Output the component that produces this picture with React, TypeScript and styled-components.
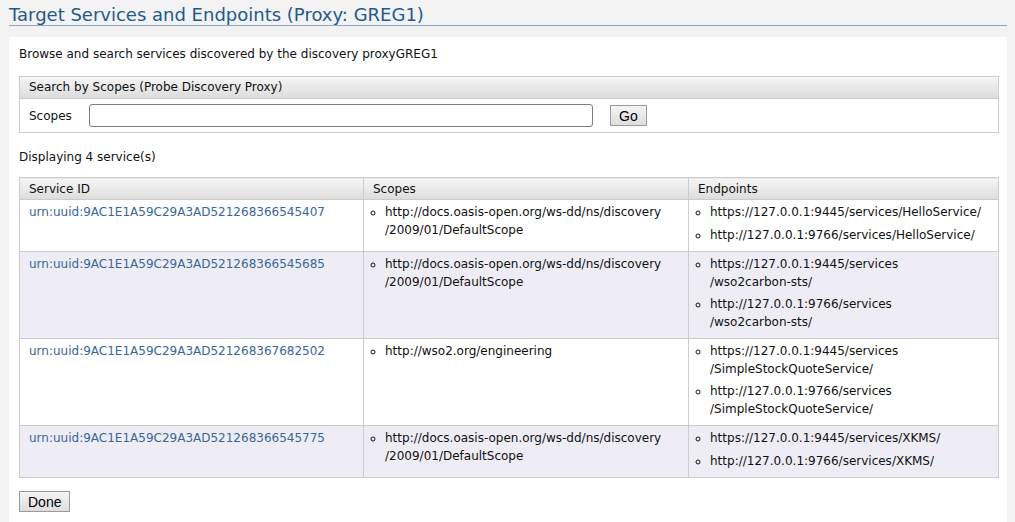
import React from "react";
import styled, { createGlobalStyle } from "styled-components";

const Global = createGlobalStyle`
  html, body { margin: 0; padding: 0; background: #f3f3f3; }
  body { font-family: "DejaVu Sans", Verdana, sans-serif; font-size: 12px; color: #111; }
`;

const Page = styled.div`
  padding: 0 8px 0 9px;
`;

const Title = styled.h2`
  margin: 0;
  padding: 5px 0 0 0;
  height: 20px;
  font-size: 18px;
  font-weight: normal;
  color: #1f5a8e;
  border-bottom: 1px solid #8ea6cb;
  line-height: 20px;
`;

const Content = styled.div`
  margin-top: 11px;
  background: #fff;
  padding: 9px 8px 20px 10px;
`;

const Intro = styled.p`
  margin: 0;
  line-height: 16px;
`;

const Box = styled.div`
  margin-top: 14px;
  border: 1px solid #cccccc;
`;

const BoxHead = styled.div`
  height: 21px;
  line-height: 21px;
  padding-left: 9px;
  border-bottom: 1px solid #cccccc;
  background: linear-gradient(#f6f6f6, #dcdcdc);
`;

const SearchRow = styled.div`
  display: flex;
  align-items: center;
  height: 33px;
  padding-left: 9px;
`;

const Label = styled.span`
  width: 60px;
`;

const Input = styled.input`
  box-sizing: border-box;
  width: 504px;
  height: 23px;
  border: 1px solid #7f7f7f;
  border-radius: 3px;
  background: #fff;
  margin: 0;
`;

const Button = styled.button<{ $ml?: number }>`
  box-sizing: border-box;
  height: 21px;
  padding: 0 8px;
  font-family: "Liberation Sans", Arial, sans-serif;
  font-size: 14px;
  line-height: 18px;
  color: #000;
  border: 1px solid #9a9a9a;
  background: linear-gradient(#f4f4f4, #dedede);
  margin-left: ${(p) => p.$ml ?? 0}px;
`;

const Count = styled.p`
  margin: 16px 0 0 0;
  line-height: 16px;
`;

const Table = styled.table`
  margin-top: 12px;
  width: 100%;
  border-collapse: collapse;
  border: 1px solid #cccccc;
`;

const Th = styled.th<{ $w?: number }>`
  text-align: left;
  font-weight: normal;
  height: 21px;
  line-height: 16px;
  padding: 0 9px;
  border: 1px solid #cccccc;
  background: linear-gradient(#f6f6f6, #dcdcdc);
  width: ${(p) => (p.$w ? `${p.$w}px` : "auto")};
`;

const Tr = styled.tr<{ $alt?: boolean }>`
  background: ${(p) => (p.$alt ? "#eeedf6" : "#fff")};
`;

const Td = styled.td`
  vertical-align: top;
  padding: 4px 9px 7px 9px;
  border: 1px solid #cccccc;
  line-height: 17.5px;
`;

const Link = styled.a`
  color: #386799;
  text-decoration: none;
`;

const List = styled.ul`
  margin: 0;
  padding-left: 12px;
  list-style: circle;
  li + li { margin-top: 5px; }
`;

const Footer = styled.div`
  margin-top: 13px;
`;

const rows = [
  {
    id: "urn:uuid:9AC1E1A59C29A3AD521268366545407",
    scopes: ["http://docs.oasis-open.org/ws-dd/ns/discovery /2009/01/DefaultScope"],
    eps: [
      "https://127.0.0.1:9445/services/HelloService/",
      "http://127.0.0.1:9766/services/HelloService/",
    ],
  },
  {
    id: "urn:uuid:9AC1E1A59C29A3AD521268366545685",
    scopes: ["http://docs.oasis-open.org/ws-dd/ns/discovery /2009/01/DefaultScope"],
    eps: [
      "https://127.0.0.1:9445/services /wso2carbon-sts/",
      "http://127.0.0.1:9766/services /wso2carbon-sts/",
    ],
  },
  {
    id: "urn:uuid:9AC1E1A59C29A3AD521268367682502",
    scopes: ["http://wso2.org/engineering"],
    eps: [
      "https://127.0.0.1:9445/services /SimpleStockQuoteService/",
      "http://127.0.0.1:9766/services /SimpleStockQuoteService/",
    ],
  },
  {
    id: "urn:uuid:9AC1E1A59C29A3AD521268366545775",
    scopes: ["http://docs.oasis-open.org/ws-dd/ns/discovery /2009/01/DefaultScope"],
    eps: [
      "https://127.0.0.1:9445/services/XKMS/",
      "http://127.0.0.1:9766/services/XKMS/",
    ],
  },
];

const Lines = ({ text }: { text: string }) => {
  const parts = text.split(" ");
  return (
    <>
      {parts.map((p, i) => (
        <React.Fragment key={i}>
          {i > 0 && <br />}
          {p}
        </React.Fragment>
      ))}
    </>
  );
};

export default function App() {
  return (
    <Page>
      <Global />
      <Title>Target Services and Endpoints (Proxy: GREG1)</Title>
      <Content>
        <Intro>Browse and search services discovered by the discovery proxyGREG1</Intro>
        <Box>
          <BoxHead>Search by Scopes (Probe Discovery Proxy)</BoxHead>
          <SearchRow>
            <Label>Scopes</Label>
            <Input type="text" />
            <Button $ml={17}>Go</Button>
          </SearchRow>
        </Box>
        <Count>Displaying 4 service(s)</Count>
        <Table>
          <thead>
            <tr>
              <Th $w={325}>Service ID</Th>
              <Th $w={306}>Scopes</Th>
              <Th>Endpoints</Th>
            </tr>
          </thead>
          <tbody>
            {rows.map((r, i) => (
              <Tr key={r.id} $alt={i % 2 === 1}>
                <Td>
                  <Link href="#">{r.id}</Link>
                </Td>
                <Td>
                  <List>
                    {r.scopes.map((s) => (
                      <li key={s}>
                        <Lines text={s} />
                      </li>
                    ))}
                  </List>
                </Td>
                <Td>
                  <List>
                    {r.eps.map((s) => (
                      <li key={s}>
                        <Lines text={s} />
                      </li>
                    ))}
                  </List>
                </Td>
              </Tr>
            ))}
          </tbody>
        </Table>
        <Footer>
          <Button>Done</Button>
        </Footer>
      </Content>
    </Page>
  );
}
